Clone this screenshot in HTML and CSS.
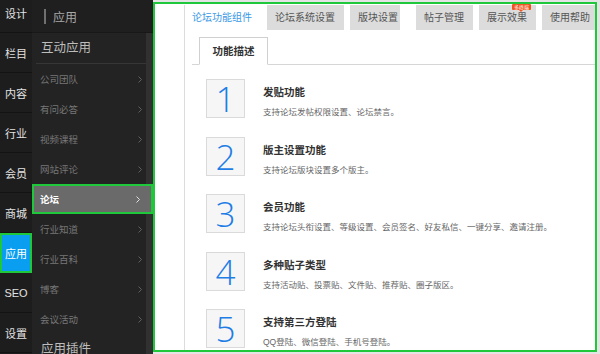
FILE: index.html
```html
<!DOCTYPE html>
<html lang="zh-CN">
<head>
    <meta charset="UTF-8">
    <meta name="viewport" content="width=device-width, initial-scale=1.0">
    <title>应用 - 论坛功能组件</title>
    <link rel="stylesheet" href="styles.css">
</head>
<body>
    <div class="page">
        <nav class="rail">
            <ul class="rail-list">
                <li class="rail-item">设计</li>
                <li class="rail-item">栏目</li>
                <li class="rail-item">内容</li>
                <li class="rail-item">行业</li>
                <li class="rail-item">会员</li>
                <li class="rail-item">商城</li>
                <li class="rail-item is-active">应用</li>
                <li class="rail-item">SEO</li>
                <li class="rail-item">设置</li>
            </ul>
        </nav>

        <aside class="submenu">
            <div class="submenu-head"><span class="submenu-bar"></span>应用</div>
            <div class="submenu-body">
                <div class="group-title">互动应用</div>
                <ul class="menu">
                    <li class="menu-item">公司团队<svg class="chev" viewBox="0 0 4 7"><polyline points="0.5,0.5 3.5,3.5 0.5,6.5"/></svg></li>
                    <li class="menu-item">有问必答<svg class="chev" viewBox="0 0 4 7"><polyline points="0.5,0.5 3.5,3.5 0.5,6.5"/></svg></li>
                    <li class="menu-item">视频课程<svg class="chev" viewBox="0 0 4 7"><polyline points="0.5,0.5 3.5,3.5 0.5,6.5"/></svg></li>
                    <li class="menu-item">网站评论<svg class="chev" viewBox="0 0 4 7"><polyline points="0.5,0.5 3.5,3.5 0.5,6.5"/></svg></li>
                    <li class="menu-item is-active">论坛<svg class="chev" viewBox="0 0 4 7"><polyline points="0.5,0.5 3.5,3.5 0.5,6.5"/></svg></li>
                    <li class="menu-item">行业知道<svg class="chev" viewBox="0 0 4 7"><polyline points="0.5,0.5 3.5,3.5 0.5,6.5"/></svg></li>
                    <li class="menu-item">行业百科<svg class="chev" viewBox="0 0 4 7"><polyline points="0.5,0.5 3.5,3.5 0.5,6.5"/></svg></li>
                    <li class="menu-item">博客<svg class="chev" viewBox="0 0 4 7"><polyline points="0.5,0.5 3.5,3.5 0.5,6.5"/></svg></li>
                    <li class="menu-item">会议活动<svg class="chev" viewBox="0 0 4 7"><polyline points="0.5,0.5 3.5,3.5 0.5,6.5"/></svg></li>
                </ul>
                <div class="group-title">应用插件</div>
            </div>
        </aside>

        <main class="panel">
            <div class="board">
                <div class="tabs">
                    <div class="tab is-active">论坛功能组件</div>
                    <div class="tab">论坛系统设置</div>
                    <div class="tab tab-tight">版块设置</div>
                    <div class="tab">帖子管理</div>
                    <div class="tab">展示效果<span class="badge">多终端</span></div>
                    <div class="tab">使用帮助</div>
                </div>

                <div class="subtabs">
                    <div class="subtab">功能描述</div>
                </div>

                <ul class="features">
                    <li class="feature">
                        <div class="num">1</div>
                        <div class="feature-text">
                            <h3>发贴功能</h3>
                            <p>支持论坛发帖权限设置、论坛禁言。</p>
                        </div>
                    </li>
                    <li class="feature">
                        <div class="num">2</div>
                        <div class="feature-text">
                            <h3>版主设置功能</h3>
                            <p>支持论坛版块设置多个版主。</p>
                        </div>
                    </li>
                    <li class="feature">
                        <div class="num">3</div>
                        <div class="feature-text">
                            <h3>会员功能</h3>
                            <p>支持论坛头衔设置、等级设置、会员签名、好友私信、一键分享、邀请注册。</p>
                        </div>
                    </li>
                    <li class="feature">
                        <div class="num">4</div>
                        <div class="feature-text">
                            <h3>多种贴子类型</h3>
                            <p>支持活动贴、投票贴、文件贴、推荐贴、圈子版区。</p>
                        </div>
                    </li>
                    <li class="feature">
                        <div class="num">5</div>
                        <div class="feature-text">
                            <h3>支持第三方登陆</h3>
                            <p>QQ登陆、微信登陆、手机号登陆。</p>
                        </div>
                    </li>
                </ul>
            </div>
        </main>
    </div>
</body>
</html>
```

FILE: styles.css
```css
* {
    margin: 0;
    padding: 0;
    box-sizing: border-box;
}

body {
    font-family: 'Liberation Sans', 'Noto Sans CJK SC', sans-serif;
    width: 600px;
    height: 354px;
    overflow: hidden;
}

ul {
    list-style: none;
}

.page {
    display: flex;
    height: 354px;
    background: #e4e4e4;
}

/* 左侧一级导航 */
.rail {
    width: 32px;
    flex-shrink: 0;
    background: #1d1d1d;
    overflow: hidden;
}

.rail-list {
    margin-top: -7px;
}

.rail-item {
    height: 40px;
    border-bottom: 1px solid #131313;
    display: flex;
    align-items: center;
    justify-content: center;
    font-size: 11px;
    color: #e2e2e2;
}

.rail-item.is-active {
    background: #0a9ef0;
    border: 2px solid #1fc83a;
    color: #fff;
}

/* 二级菜单 */
.submenu {
    width: 121px;
    flex-shrink: 0;
    background: #232323;
    display: flex;
    flex-direction: column;
    overflow: hidden;
}

.submenu-head {
    height: 33px;
    flex-shrink: 0;
    background: #1f1f1f;
    border-bottom: 1px solid #181818;
    display: flex;
    align-items: center;
    padding-left: 12px;
    font-size: 12px;
    color: #a8a8a8;
}

.submenu-bar {
    width: 2px;
    height: 15px;
    background: #707070;
    margin-right: 7px;
}

.submenu-body {
    flex: 1;
    background: linear-gradient(to left, #313131 7px, transparent 7px);
}

.group-title {
    height: 31px;
    line-height: 30px;
    margin: 0 7px 0 4px;
    padding-left: 5px;
    border-bottom: 1px solid #363636;
    font-size: 12.5px;
    color: #bdbdbd;
}

.menu-item {
    height: 30px;
    margin-right: 7px;
    padding: 0 4px 0 8px;
    display: flex;
    align-items: center;
    justify-content: space-between;
    font-size: 9.5px;
    color: #777;
}

.menu-item.is-active {
    margin-right: 0;
    padding: 0 11px 0 6px;
    background: #6a6a6a;
    border: 2px solid #1fc83a;
    color: #fff;
    font-weight: bold;
}

.chev {
    width: 4px;
    height: 7px;
    fill: none;
    stroke: #5f5f5f;
    stroke-width: 1;
}

.menu-item.is-active .chev {
    stroke: #e0e0e0;
}

/* 主面板 */
.panel {
    flex: 1;
    margin: 2px 3px 2px 0;
    border: 2px solid #1fc83a;
    background: #fff;
    padding: 1px 0 0 29px;
    overflow: hidden;
}

.board {
    height: 100%;
    border-left: 1px solid #dcdcdc;
}

.tabs {
    display: flex;
    gap: 6px;
    height: 25px;
}

.tab {
    position: relative;
    padding: 0 9px 0 8px;
    line-height: 25px;
    background: #dcdcdc;
    color: #555;
    font-size: 10px;
    white-space: nowrap;
}

.tab.is-active {
    background: #fff;
    color: #3b99e6;
    padding-left: 7px;
}

.tab-tight {
    padding-right: 2px;
    margin-right: 10px;
}

.badge {
    position: absolute;
    top: -1px;
    right: 5px;
    height: 6px;
    padding: 0 2px;
    background: #f2541f;
    color: #fff;
    font-size: 5px;
    line-height: 6px;
    border-radius: 1px;
}

.badge::after {
    content: '';
    position: absolute;
    left: 50%;
    bottom: -2px;
    margin-left: -2px;
    border-left: 2px solid transparent;
    border-right: 2px solid transparent;
    border-top: 2px solid #f2541f;
}

.subtabs {
    display: flex;
    margin: 7px 0 0 7px;
    padding-left: 7px;
    border-bottom: 1px solid #d6d6d6;
}

.subtab {
    width: 69px;
    height: 28px;
    margin-bottom: -1px;
    border: 1px solid #d0d0d0;
    border-bottom-color: #fff;
    background: #fff;
    text-align: center;
    line-height: 27px;
    font-size: 10.5px;
    font-weight: bold;
    color: #333;
}

.features {
    padding: 14px 0 0 21px;
}

.feature {
    display: flex;
    margin-bottom: 17.5px;
}

.num {
    width: 39px;
    height: 39px;
    flex-shrink: 0;
    border: 1px solid #dadada;
    background: #f6f6f6;
    display: flex;
    align-items: center;
    justify-content: center;
    font-family: 'Open Sans', 'Liberation Sans', sans-serif;
    font-weight: 300;
    font-size: 35px;
    line-height: 1;
    color: #1f7de6;
}

.feature-text {
    margin-left: 18px;
    padding-top: 6px;
}

.feature-text h3 {
    font-size: 10.5px;
    line-height: 14px;
    font-weight: bold;
    color: #333;
}

.feature-text p {
    margin-top: 6px;
    font-size: 8.5px;
    line-height: 14px;
    color: #666;
    white-space: nowrap;
}
```
